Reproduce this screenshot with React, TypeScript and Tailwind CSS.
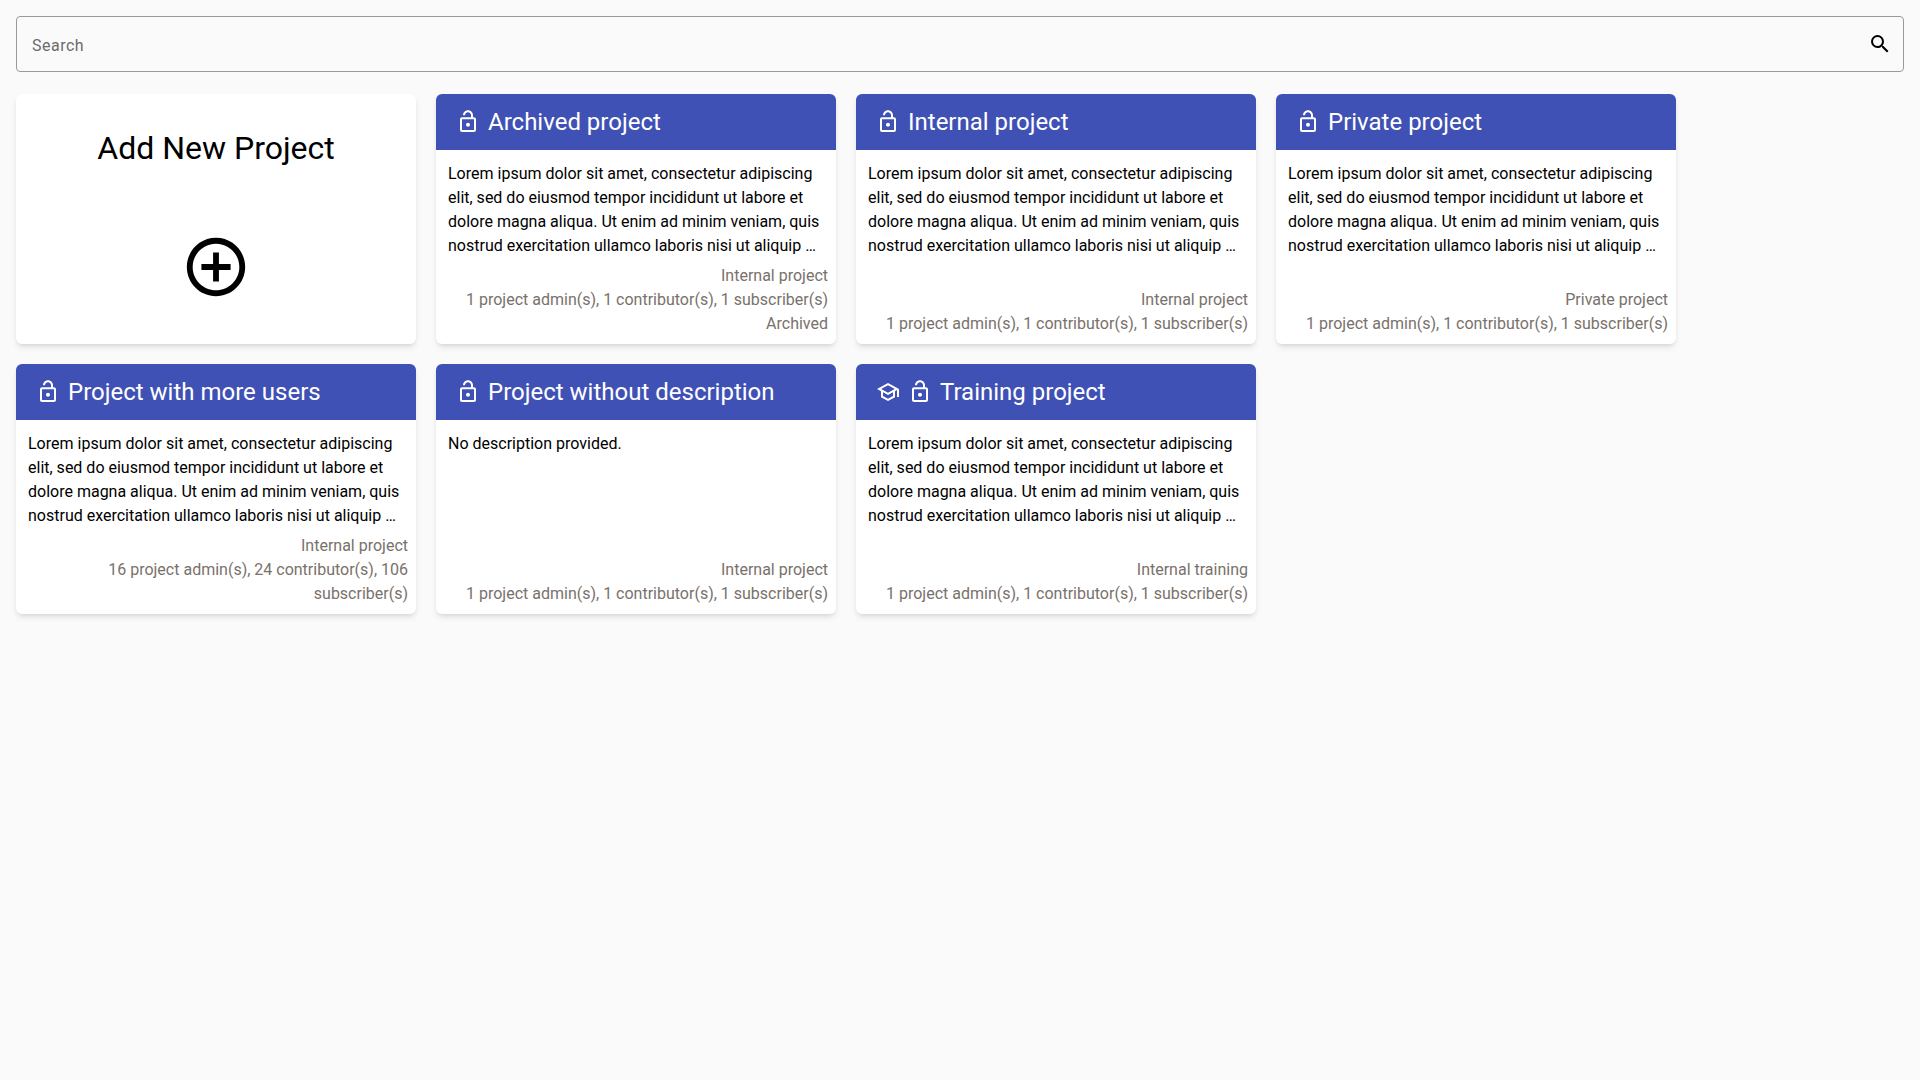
type IconProps = { d: string; className?: string };

const ICONS = {
  search:
    "M15.5 14h-.79l-.28-.27A6.471 6.471 0 0 0 16 9.5 6.5 6.5 0 1 0 9.5 16c1.61 0 3.09-.59 4.23-1.57l.27.28v.79l5 4.99L20.49 19l-4.99-5zm-6 0C7.01 14 5 11.99 5 9.5S7.01 5 9.5 5 14 7.01 14 9.5 11.99 14 9.5 14z",
  addCircle:
    "M13 7h-2v4H7v2h4v4h2v-4h4v-2h-4V7zm-1-5C6.48 2 2 6.48 2 12s4.48 10 10 10 10-4.48 10-10S17.52 2 12 2zm0 18c-4.41 0-8-3.59-8-8s3.59-8 8-8 8 3.59 8 8-3.59 8-8 8z",
  lockOpen:
    "M18 7.3h-1V5.2c0-2.76-2.24-5-5-5S7 2.44 7 5.2h2c0-1.66 1.34-3 3-3s3 1.34 3 3v2.1H6c-1.1 0-2 .9-2 2V20c0 1.1.9 2 2 2h12c1.1 0 2-.9 2-2V9.3c0-1.1-.9-2-2-2zm0 12.7H6V9.3h12V20zm-6-3.3c1.1 0 2-.9 2-2s-.9-2-2-2-2 .9-2 2 .9 2 2 2z",
  school:
    "M12 3 1 9l4 2.18v6L12 21l7-3.82v-6l2-1.09V17h2V9L12 3zm6.82 6L12 12.72 5.18 9 12 5.28 18.82 9zM17 15.99l-5 2.73-5-2.73v-3.72L12 15l5-2.73v3.72z",
};

function Icon({ d, className = "size-6" }: IconProps) {
  return (
    <svg viewBox="0 0 24 24" fill="currentColor" className={`shrink-0 ${className}`} aria-hidden="true">
      <path d={d} />
    </svg>
  );
}

const LOREM =
  "Lorem ipsum dolor sit amet, consectetur adipiscing elit, sed do eiusmod tempor incididunt ut labore et dolore magna aliqua. Ut enim ad minim veniam, quis nostrud exercitation ullamco laboris nisi ut aliquip …";

type Project = {
  name: string;
  description?: string;
  kind: string;
  users: string;
  archived?: boolean;
  training?: boolean;
};

const FEW_USERS = "1 project admin(s), 1 contributor(s), 1 subscriber(s)";

const PROJECTS: Project[] = [
  { name: "Archived project", description: LOREM, kind: "Internal project", users: FEW_USERS, archived: true },
  { name: "Internal project", description: LOREM, kind: "Internal project", users: FEW_USERS },
  { name: "Private project", description: LOREM, kind: "Private project", users: FEW_USERS },
  {
    name: "Project with more users",
    description: LOREM,
    kind: "Internal project",
    users: "16 project admin(s), 24 contributor(s), 106 subscriber(s)",
  },
  { name: "Project without description", kind: "Internal project", users: FEW_USERS },
  { name: "Training project", description: LOREM, kind: "Internal training", users: FEW_USERS, training: true },
];

function ProjectCard({ project }: { project: Project }) {
  return (
    <article className="flex h-[250px] w-[400px] flex-col overflow-hidden rounded-md bg-white shadow-md">
      <header className="flex h-14 shrink-0 items-center gap-2 bg-[#3f51b5] px-5 text-white">
        {project.training && <Icon d={ICONS.school} />}
        <Icon d={ICONS.lockOpen} />
        <h2 className="text-2xl">{project.name}</h2>
      </header>
      <p className="px-3 pt-3 text-black">{project.description ?? "No description provided."}</p>
      <div className="mt-auto flex flex-col px-2 pb-2 text-right text-stone-500">
        <span>{project.kind}</span>
        <span>{project.users}</span>
        {project.archived && <span>Archived</span>}
      </div>
    </article>
  );
}

export default function App() {
  return (
    <main className="min-h-screen bg-[#fafafa] p-4 font-['Roboto',sans-serif] text-base text-black">
      <label className="flex h-14 items-center rounded border border-[#9a9a9a] pr-[11px] pl-[15px]">
        <input
          type="text"
          placeholder="Search"
          className="h-7 flex-1 bg-transparent pt-[3px] tracking-[0.5px] outline-none placeholder:text-[#6b6b6b]"
        />
        <Icon d={ICONS.search} />
      </label>
      <section className="mt-[22px] flex flex-wrap gap-5">
        <button className="flex h-[250px] w-[400px] flex-col items-center rounded-md bg-white pt-[34px] shadow-md">
          <span className="text-[32px] leading-10">Add New Project</span>
          <Icon d={ICONS.addCircle} className="mt-[63.5px] size-[70px]" />
        </button>
        {PROJECTS.map((project) => (
          <ProjectCard key={project.name} project={project} />
        ))}
      </section>
    </main>
  );
}
